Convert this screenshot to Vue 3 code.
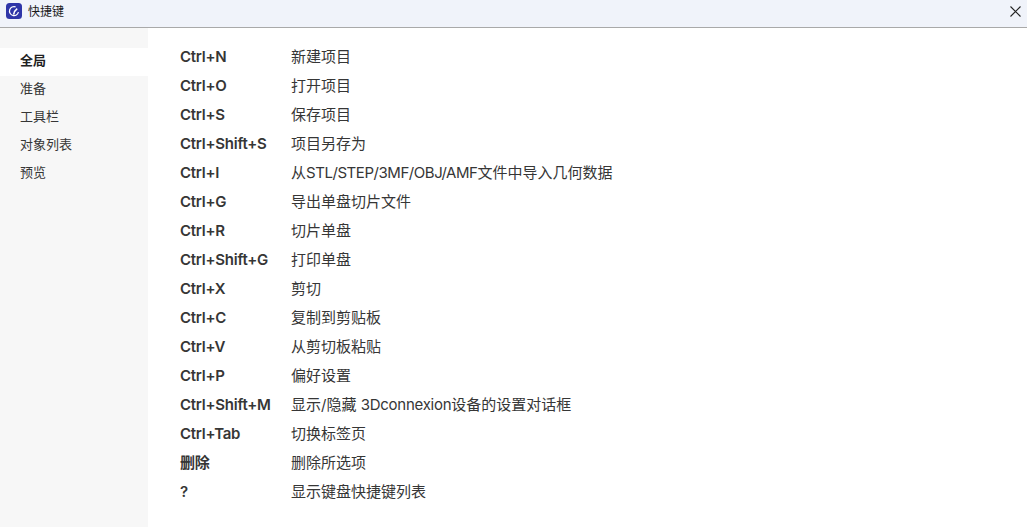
<script setup>
const tabs = ['全局', '准备', '工具栏', '对象列表', '预览']
const rows = [
  { key: 'Ctrl+N', before: '新建项目' },
  { key: 'Ctrl+O', before: '打开项目' },
  { key: 'Ctrl+S', before: '保存项目' },
  { key: 'Ctrl+Shift+S', before: '项目另存为' },
  { key: 'Ctrl+I', before: '从', latin: 'STL/STEP/3MF/OBJ/AMF', after: '文件中导入几何数据' },
  { key: 'Ctrl+G', before: '导出单盘切片文件' },
  { key: 'Ctrl+R', before: '切片单盘' },
  { key: 'Ctrl+Shift+G', before: '打印单盘' },
  { key: 'Ctrl+X', before: '剪切' },
  { key: 'Ctrl+C', before: '复制到剪贴板' },
  { key: 'Ctrl+V', before: '从剪切板粘贴' },
  { key: 'Ctrl+P', before: '偏好设置' },
  { key: 'Ctrl+Shift+M', before: '显示/隐藏 ', latin2: '3Dconnexion', after: '设备的设置对话框' },
  { key: 'Ctrl+Tab', before: '切换标签页' },
  { key: '删除', cjk: true, before: '删除所选项' },
  { key: '?', before: '显示键盘快捷键列表' },
]
</script>

<template>
  <div class="window">
    <header class="titlebar">
      <svg class="logo" width="16" height="16" viewBox="0 0 16 16">
        <rect width="16" height="16" rx="3.5" fill="#2e35a8" />
        <path d="M9.6 3.9 A4.5 4.5 0 1 0 12.4 9" fill="none" stroke="#fff" stroke-width="1.2" />
        <path d="M7.6 11.6 Q8 8 11.2 5.6" stroke="#fff" stroke-width="1.6" fill="none" />
      </svg>
      <span class="title">快捷键</span>
      <svg class="close" width="11" height="11" viewBox="0 0 11 11">
        <path d="M0.5 0.5 L10.5 10.5 M10.5 0.5 L0.5 10.5" stroke="#222" stroke-width="1.1" fill="none" />
      </svg>
    </header>
    <div class="body">
      <nav class="sidebar">
        <div v-for="(t, i) in tabs" :key="t" class="tab" :class="{ active: i === 0 }">{{ t }}</div>
      </nav>
      <main class="content">
        <div v-for="r in rows" :key="r.key" class="row">
          <span class="key" :class="{ cjk: r.cjk }">{{ r.key }}</span>
          <span class="desc">{{ r.before }}<span v-if="r.latin" class="latin">{{ r.latin }}</span><span v-if="r.latin2" class="latin-soft">{{ r.latin2 }}</span>{{ r.after }}</span>
        </div>
      </main>
    </div>
  </div>
</template>

<style scoped>
.window {
  width: 1027px;
  height: 527px;
  display: flex;
  flex-direction: column;
  background: #fff;
  font-family: Inter, "Noto Sans CJK SC", sans-serif;
  color: #363636;
  overflow: hidden;
}
.titlebar {
  height: 28px;
  flex: none;
  box-sizing: border-box;
  display: flex;
  align-items: center;
  padding: 0 6px 5px 6px;
  background: #f0f3fa;
  border-bottom: 1px solid #a9a9a9;
}
.title {
  margin-left: 6px;
  margin-bottom: 1px;
  font-size: 12px;
  color: #1a1a1a;
}
.close {
  margin-left: auto;
}
.body {
  flex: 1;
  display: flex;
  min-height: 0;
}
.sidebar {
  width: 148px;
  flex: none;
  box-sizing: border-box;
  padding-top: 20px;
  background: #f7f7f7;
}
.tab {
  height: 28px;
  line-height: 25px;
  padding-left: 20px;
  font-size: 13px;
}
.tab.active {
  background: #fff;
  font-weight: 700;
  color: #222;
}
.content {
  flex: 1;
  padding: 13px 0 0 32px;
}
.row {
  height: 29px;
  display: flex;
  align-items: center;
  font-size: 15px;
}
.key {
  width: 111px;
  flex: none;
  padding-top: 2px;
  font-weight: 600;
  letter-spacing: -0.25px;
  white-space: nowrap;
}
.key.cjk {
  padding-top: 0;
}
.desc {
  white-space: nowrap;
}
.latin {
  letter-spacing: -0.45px;
}
.latin-soft {
  letter-spacing: -0.25px;
}
</style>
